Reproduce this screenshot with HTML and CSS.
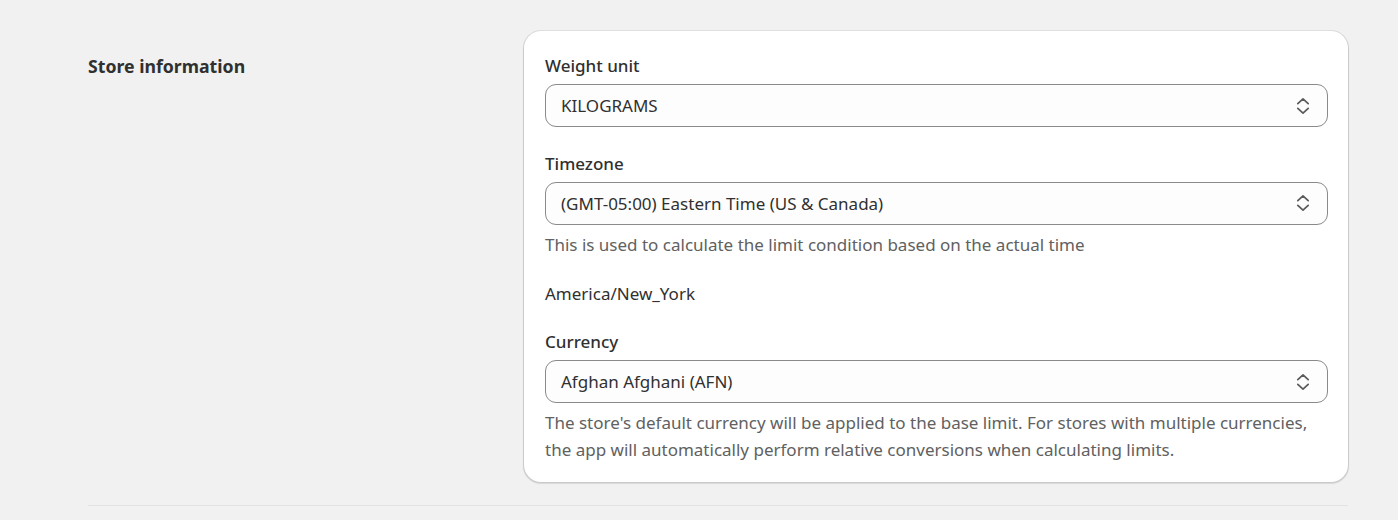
FILE: index.html
```html
<!DOCTYPE html>
<html>
<head>
<meta charset="utf-8">
<link rel="stylesheet" href="styles.css">
</head>
<body>
<div class="page">
  <section class="section">
    <div class="aside"><h2 class="title">Store information</h2></div>
    <div class="card">
      <div class="field">
        <label class="label">Weight unit</label>
        <div class="select"><span>KILOGRAMS</span>
          <svg class="chev" width="14" height="18" viewBox="0 0 14 18"><polyline points="1.8,6.6 7,1.8 12.2,6.6"/><polyline points="1.8,11.4 7,16.2 12.2,11.4"/></svg>
        </div>
      </div>
      <div class="field">
        <label class="label">Timezone</label>
        <div class="select"><span>(GMT-05:00) Eastern Time (US &amp; Canada)</span>
          <svg class="chev" width="14" height="18" viewBox="0 0 14 18"><polyline points="1.8,6.6 7,1.8 12.2,6.6"/><polyline points="1.8,11.4 7,16.2 12.2,11.4"/></svg>
        </div>
        <p class="help">This is used to calculate the limit condition based on the actual time</p>
      </div>
      <p class="plain">America/New_York</p>
      <div class="field">
        <label class="label">Currency</label>
        <div class="select"><span>Afghan Afghani (AFN)</span>
          <svg class="chev" width="14" height="18" viewBox="0 0 14 18"><polyline points="1.8,6.6 7,1.8 12.2,6.6"/><polyline points="1.8,11.4 7,16.2 12.2,11.4"/></svg>
        </div>
        <p class="help">The store's default currency will be applied to the base limit. For stores with multiple currencies, the app will automatically perform relative conversions when calculating limits.</p>
      </div>
    </div>
  </section>
  <div class="divider"></div>
</div>
</body>
</html>
```

FILE: styles.css
```css
html, body {
  margin: 0;
  padding: 0;
  background: #f1f1f1;
}
body {
  font-family: "Noto Sans", "Open Sans", sans-serif;
  font-size: 17px;
  color: #303030;
}
.page {
  padding: 31px 0 0 88px;
  width: 1260px;
}
.section {
  display: grid;
  grid-template-columns: 412px 824px;
  column-gap: 24px;
}
.title {
  margin: 0;
  padding-top: 21px;
  font-size: 17.7px;
  line-height: 28px;
  font-weight: 700;
  color: #303030;
}
.card {
  background: #ffffff;
  border-radius: 17px;
  box-shadow: 0 0 0 1px rgba(0,0,0,0.07), 0 1px 1px 1px rgba(0,0,0,0.1);
  padding: 21px 20px 19px 21px;
  display: flex;
  flex-direction: column;
  gap: 22.5px;
}
.field {
  display: flex;
  flex-direction: column;
}
.label {
  line-height: 28px;
  margin-bottom: 4px;
  font-weight: 500;
}
.select {
  height: 43px;
  box-sizing: border-box;
  border: 1px solid #8a8a8a;
  border-radius: 11px;
  background: #fdfdfd;
  display: flex;
  align-items: center;
  justify-content: space-between;
  padding: 0 17px 0 15px;
}
.chev polyline {
  fill: none;
  stroke: #5a5a5a;
  stroke-width: 1.7;
  stroke-linecap: round;
  stroke-linejoin: round;
}
.help {
  margin: 6px 0 0;
  line-height: 27px;
  color: #616161;
}
.plain {
  margin: 0 0 -2.5px;
  line-height: 28px;
}
.divider {
  height: 1px;
  background: #e3e3e3;
  margin-top: 23px;
}
```
